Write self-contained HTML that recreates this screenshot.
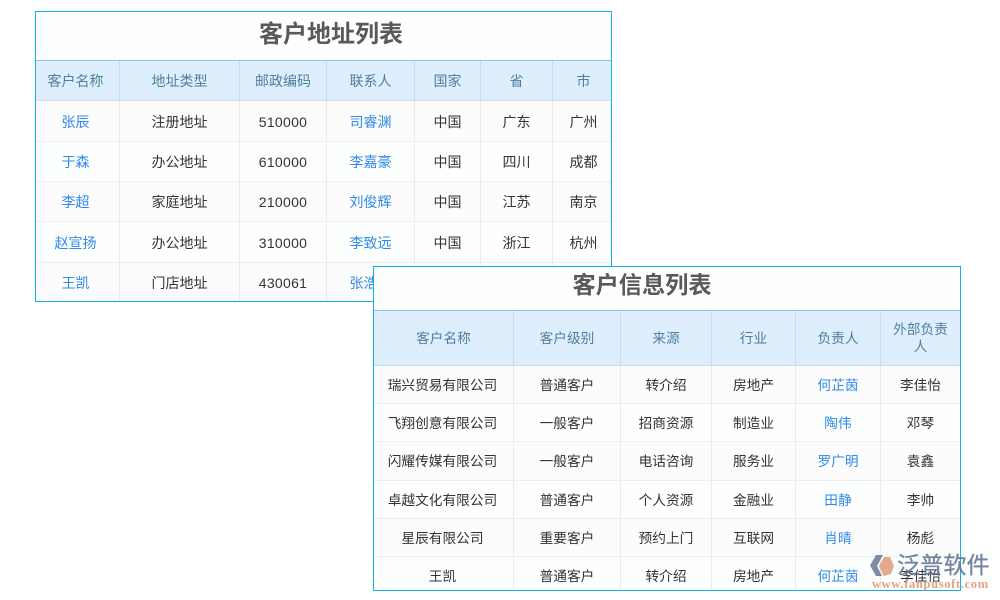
<!DOCTYPE html>
<html lang="zh-CN">
<head>
<meta charset="utf-8">
<title>客户列表</title>
<style>
html,body{margin:0;padding:0;background:#fff;}
body{width:1000px;height:600px;position:relative;overflow:hidden;font-family:"Liberation Sans","Noto Sans CJK SC",sans-serif;}
.box{position:absolute;box-sizing:border-box;border:1px solid #12afe9;background:#fdfefe;overflow:hidden;}
.title{box-sizing:border-box;text-align:center;font-weight:bold;color:#595959;border-bottom:1px solid #8cc3e6;}
table{border-collapse:separate;border-spacing:0;table-layout:fixed;}
td,th{box-sizing:border-box;padding:0;text-align:center;border-right:1px solid #ececec;border-bottom:1px solid #eeeeee;font-weight:normal;color:#333;overflow:hidden;}
th{background:#deeefc;color:#4f7f9f;border-right-color:#c6dced;border-bottom-color:#c9e0f2;line-height:17px;}
tr:nth-child(even) td{background:#fcfcfc;}
td:last-child,th:last-child{border-right:none;}
td.l{color:#2f8ae8;}
#a{left:35px;top:11px;width:577px;height:291px;}
#a .title{height:49px;font-size:24px;line-height:46px;padding-left:15px;}
#a td,#a th{font-size:14px;}
#a th{padding-top:2px;}
#a td.n{letter-spacing:.3px;}
#a td:first-child{padding-right:4px;}
#a th:first-child{padding-right:4px;}
#a td:last-child,#a th:last-child{padding-left:3px;}
#a tr.p td{padding-top:2px;}
#b{left:373px;top:266px;width:588px;height:325px;}
#b .title{height:44px;font-size:23.2px;line-height:36px;padding-right:50px;}
#b td,#b th{font-size:13.7px;}
#b td{padding-bottom:2px;}
#b td:first-child{padding-right:2px;}
.wm{position:absolute;left:868px;top:552px;width:130px;height:46px;pointer-events:none;}
.wm .cn{position:absolute;left:29px;top:0;font-size:23px;line-height:27px;letter-spacing:0.2px;color:#5e7292;opacity:.85;white-space:nowrap;-webkit-text-stroke:.35px #5e7292;}
.wm .en{position:absolute;left:4px;top:25px;font-family:"Liberation Serif",serif;font-weight:bold;font-size:12.5px;line-height:14px;letter-spacing:.66px;color:#e0906c;opacity:.85;white-space:nowrap;}
.wm svg{position:absolute;left:2px;top:2px;}
</style>
</head>
<body>
<div class="box" id="a">
<div class="title">客户地址列表</div>
<table style="width:575px">
<colgroup><col style="width:84px"><col style="width:120px"><col style="width:87px"><col style="width:88px"><col style="width:66px"><col style="width:72px"><col style="width:58px"></colgroup>
<tr style="height:40px"><th style="height:40px">客户名称</th><th>地址类型</th><th>邮政编码</th><th>联系人</th><th>国家</th><th>省</th><th>市</th></tr>
<tr class="p"><td style="height:41px" class="l">张辰</td><td>注册地址</td><td class="n">510000</td><td class="l">司睿渊</td><td>中国</td><td>广东</td><td>广州</td></tr>
<tr><td style="height:40px" class="l">于森</td><td>办公地址</td><td class="n">610000</td><td class="l">李嘉豪</td><td>中国</td><td>四川</td><td>成都</td></tr>
<tr><td style="height:40px" class="l">李超</td><td>家庭地址</td><td class="n">210000</td><td class="l">刘俊辉</td><td>中国</td><td>江苏</td><td>南京</td></tr>
<tr class="p"><td style="height:41px" class="l">赵宣扬</td><td>办公地址</td><td class="n">310000</td><td class="l">李致远</td><td>中国</td><td>浙江</td><td>杭州</td></tr>
<tr><td style="height:39px;border-bottom:none" class="l">王凯</td><td style="border-bottom:none">门店地址</td><td class="n" style="border-bottom:none">430061</td><td style="border-bottom:none" class="l">张浩然</td><td style="border-bottom:none">中国</td><td style="border-bottom:none">湖北</td><td style="border-bottom:none">武汉</td></tr>
</table>
</div>

<div class="box" id="b">
<div class="title">客户信息列表</div>
<table style="width:586px">
<colgroup><col style="width:140px"><col style="width:107px"><col style="width:91px"><col style="width:84px"><col style="width:85px"><col style="width:79px"></colgroup>
<tr><th style="height:55px">客户名称</th><th>客户级别</th><th>来源</th><th>行业</th><th>负责人</th><th style="padding:0 8px">外部负责人</th></tr>
<tr><td style="height:38px">瑞兴贸易有限公司</td><td>普通客户</td><td>转介绍</td><td>房地产</td><td class="l">何芷茵</td><td>李佳怡</td></tr>
<tr><td style="height:38px">飞翔创意有限公司</td><td>一般客户</td><td>招商资源</td><td>制造业</td><td class="l">陶伟</td><td>邓琴</td></tr>
<tr><td style="height:39px">闪耀传媒有限公司</td><td>一般客户</td><td>电话咨询</td><td>服务业</td><td class="l">罗广明</td><td>袁鑫</td></tr>
<tr><td style="height:38px">卓越文化有限公司</td><td>普通客户</td><td>个人资源</td><td>金融业</td><td class="l">田静</td><td>李帅</td></tr>
<tr><td style="height:38px">星辰有限公司</td><td>重要客户</td><td>预约上门</td><td>互联网</td><td class="l">肖晴</td><td>杨彪</td></tr>
<tr><td style="height:38px">王凯</td><td>普通客户</td><td>转介绍</td><td>房地产</td><td class="l">何芷茵</td><td>李佳怡</td></tr>
</table>
</div>

<div class="wm">
<svg width="28" height="27" viewBox="0 0 28 27">
<path d="M0 11.5 L6 1 L13 1 L7 12 L12 22 L6 22 Z" fill="#66799a" opacity=".85"/>
<path d="M14 3 L20 3 L24 12 L21 20 L13.5 22 L9 12 Z" fill="#e2a084" opacity=".9"/>
</svg>
<div class="cn">泛普软件</div>
<div class="en">www.fanpusoft.com</div>
</div>
</body>
</html>
